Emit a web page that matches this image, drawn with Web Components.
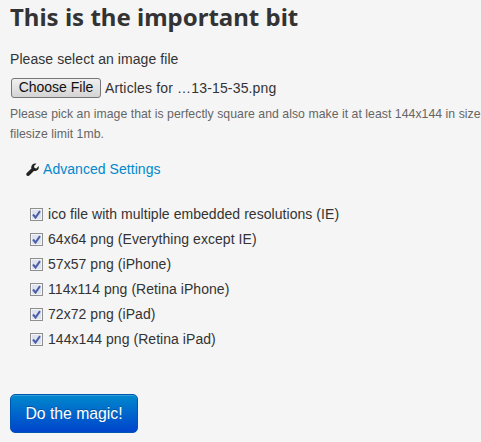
<!DOCTYPE html>
<html><head><meta charset="utf-8"><style>
html,body{margin:0;height:442px;overflow:hidden;background:#f5f5f5}
body{font:14px/20px "Liberation Sans",Arial,sans-serif;color:#333}
</style></head><body>
<magic-form>
<h-title slot="title">This is the important bit</h-title>
<file-field slot="file" label="Please select an image file" filename="Articles for …13-15-35.png">Please pick an image that is perfectly square and also make it at least 144x144 in size<br>filesize limit 1mb.</file-field>
<adv-link slot="adv">Advanced Settings</adv-link>
<check-row slot="checks">ico file with multiple embedded resolutions (IE)</check-row>
<check-row slot="checks">64x64 png (Everything except IE)</check-row>
<check-row slot="checks">57x57 png (iPhone)</check-row>
<check-row slot="checks">114x114 png (Retina iPhone)</check-row>
<check-row slot="checks">72x72 png (iPad)</check-row>
<check-row slot="checks">144x144 png (Retina iPad)</check-row>
<magic-button slot="submit">Do the magic!</magic-button>
</magic-form>
<script>
function def(name,html,init){
  customElements.define(name,class extends HTMLElement{
    constructor(){super();this.attachShadow({mode:'open'}).innerHTML=typeof html==='function'?html(this):html}
    connectedCallback(){if(init)init(this)}
  });
}
def('magic-form',`<style>
:host{display:flex;flex-direction:column;padding:0 0 0 10px;width:471px;overflow:hidden}
.checks{display:flex;flex-direction:column;gap:5px;margin:25px 0 0 20px}
.sub{margin-top:45px}
</style><slot name="title"></slot><slot name="file"></slot><slot name="adv"></slot>
<div class="checks"><slot name="checks"></slot></div><div class="sub"><slot name="submit"></slot></div>`);
def('h-title',`<style>:host{display:block;font:700 24px/30px "Noto Sans","Open Sans",sans-serif;color:#333;margin-top:2px;white-space:nowrap}</style><slot></slot>`);
def('file-field',`<style>
:host{display:block;margin-top:17px}
.l{height:20px;letter-spacing:.07px}
.row{display:flex;align-items:center;margin-top:9px;height:20px;white-space:nowrap}
.btn{box-sizing:border-box;width:90px;height:20px;margin-left:1px;border:1px solid #767676;border-radius:3px;background:linear-gradient(#f0f0f0,#d4d4d4);font:14px "Liberation Sans",Arial,sans-serif;color:#111;text-align:center;line-height:17px}
.n{margin-left:4px;color:#333;letter-spacing:.16px}
.help{margin-top:6px;font-size:12.25px;line-height:20px;color:#666;white-space:nowrap;letter-spacing:.04px}
</style><div class="l"></div><div class="row"><div class="btn">Choose File</div><span class="n"></span></div><div class="help"><slot></slot></div>`,
el=>{const s=el.shadowRoot;s.querySelector('.l').textContent=el.getAttribute('label');s.querySelector('.n').textContent=el.getAttribute('filename')});
def('adv-link',`<style>
:host{display:flex;align-items:center;gap:4px;margin:15px 0 0 16px;height:20px;color:#0088cc;letter-spacing:.05px}
svg{width:13px;height:13px;flex:none}
</style><svg viewBox="0 0 13 13"><path fill="#222" d="M12.6 2.9c.5 1.5.1 3.1-1 4.1-1 1-2.4 1.3-3.7.9L3.3 12.5c-.7.7-1.8.7-2.5 0-.7-.7-.7-1.8 0-2.5l4.600-4.600C5 4.100 5.300 2.700 6.300 1.700 7.300.6 8.900.2 10.400.7L8 3.100l.5 2 2 .5z"/></svg><span><slot></slot></span>`);
def('check-row',`<style>
:host{display:flex;align-items:center;gap:5px;height:20px;white-space:nowrap;letter-spacing:.05px}
svg{width:13px;height:13px;flex:none}
</style><svg viewBox="0 0 13 13"><rect x=".5" y=".5" width="12" height="12" fill="#e4e4ea" stroke="#8e8f8f"/><rect x="1.500" y="1.500" width="10" height="10" fill="#dfe2ef" stroke="#f4f4f6"/><path d="M3 6.500l2.500 3L10 3.200" fill="none" stroke="#4a5fa8" stroke-width="2"/></svg><span><slot></slot></span>`);
def('magic-button',`<style>
:host{display:inline-block;box-sizing:border-box;width:128px;height:39px;border-radius:5px;border:1px solid #0055b3;background:linear-gradient(#0088cc,#0044cc);color:#fff;font:15.75px/37px "Liberation Sans",Arial,sans-serif;text-align:center;text-shadow:0 -1px 0 rgba(0,0,0,.25);box-shadow:inset 0 1px 0 rgba(255,255,255,.2)}
</style><slot></slot>`);
</script>
</body></html>
